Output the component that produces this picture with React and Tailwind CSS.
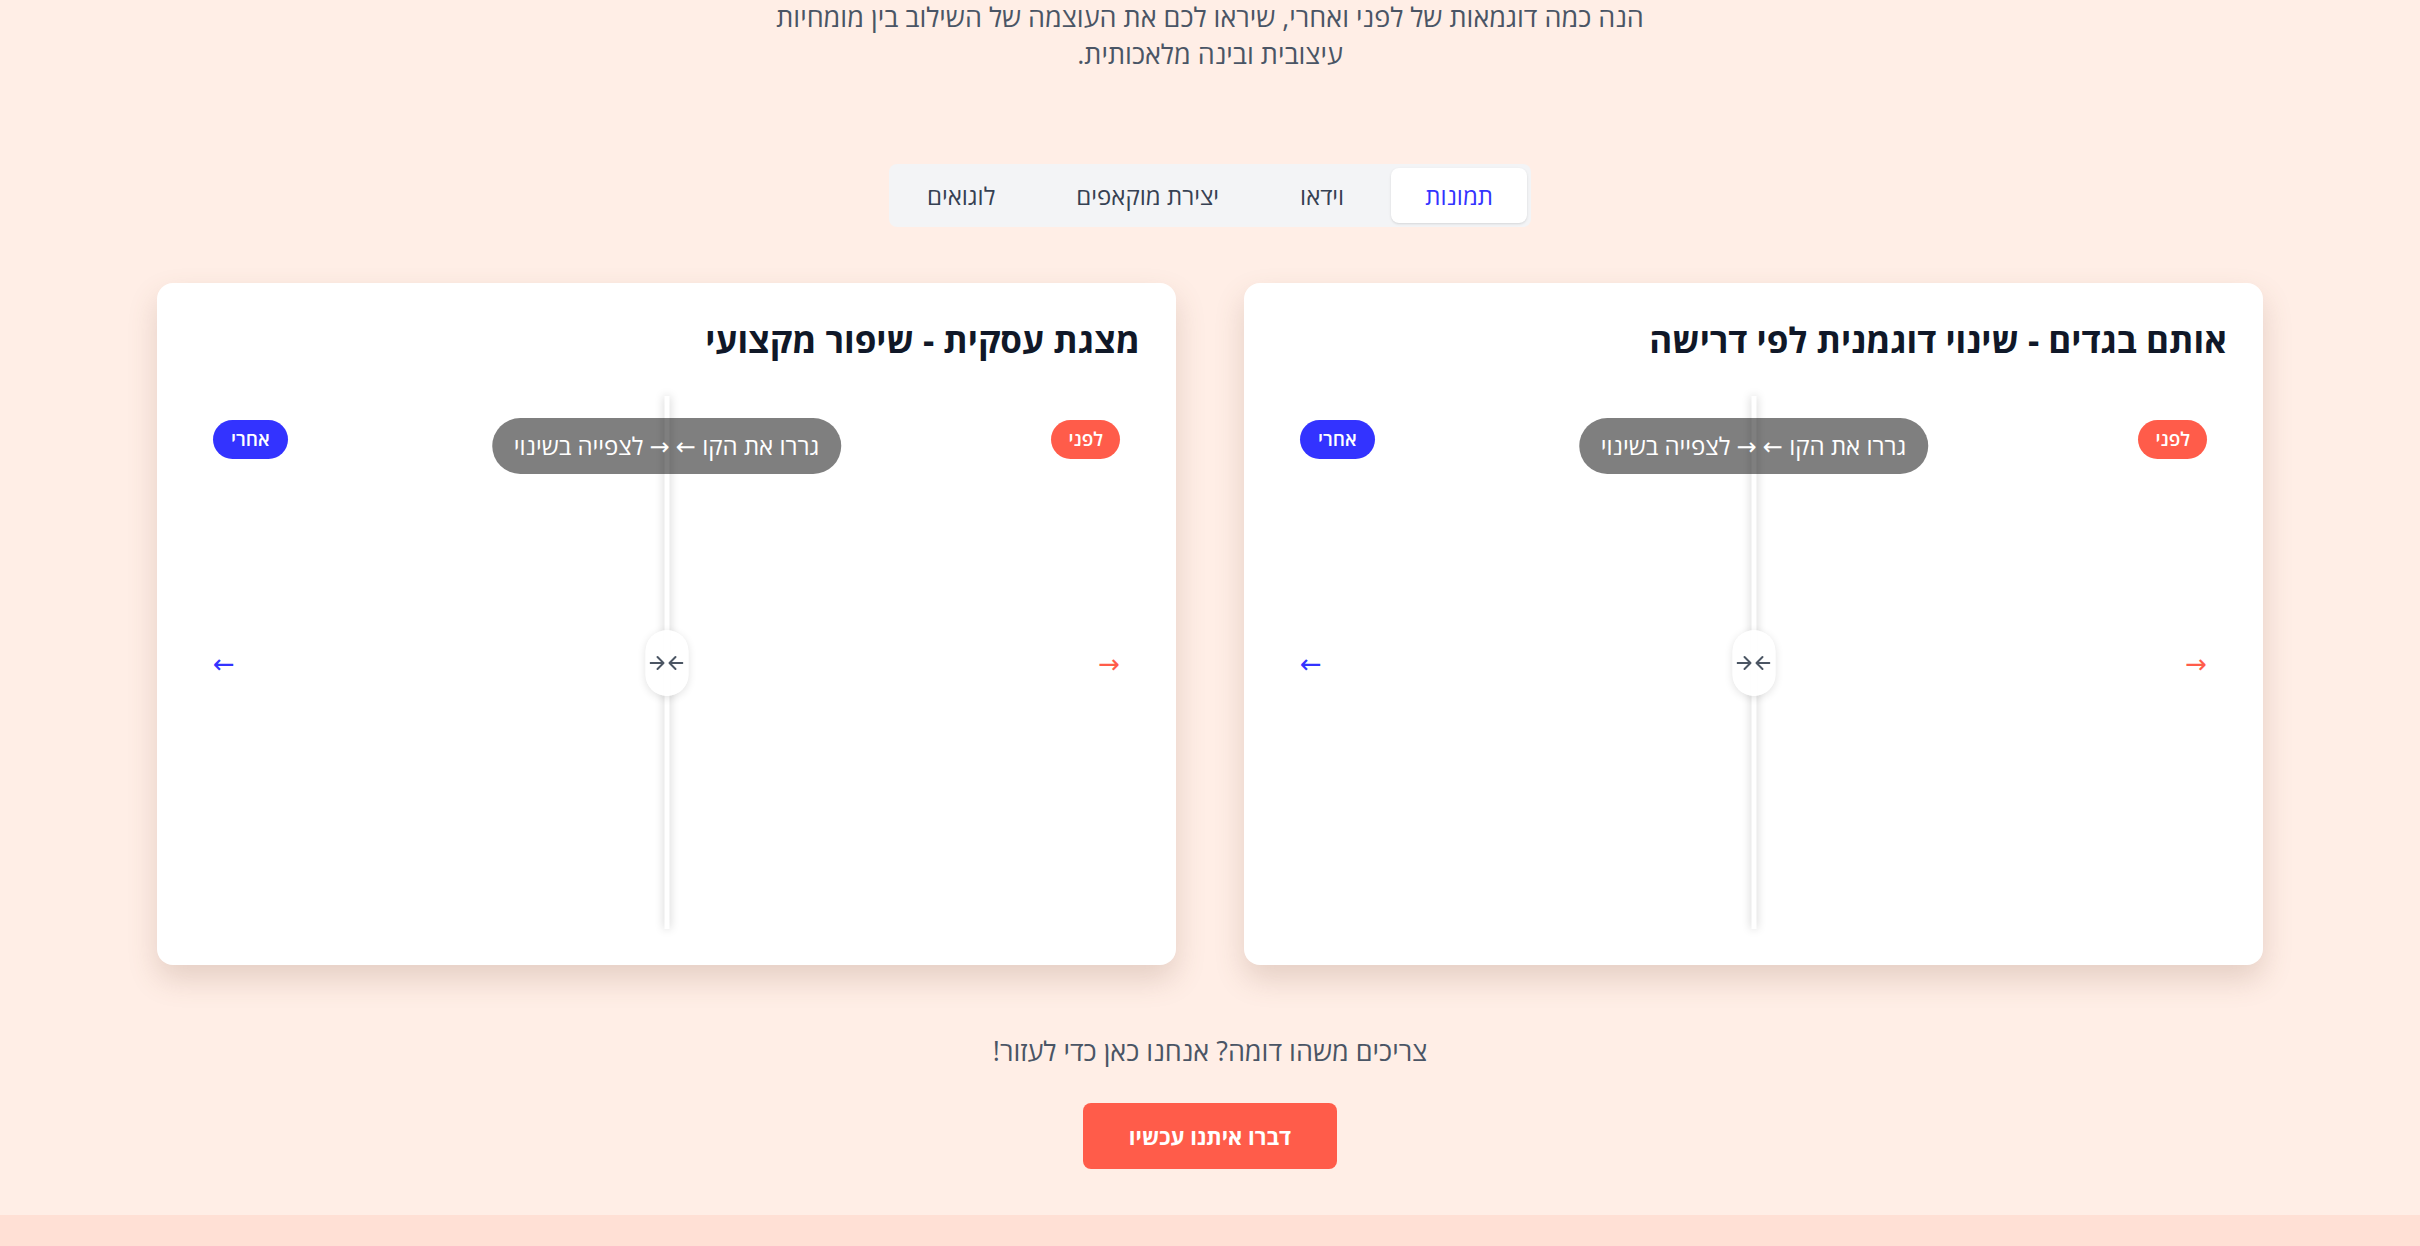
import React, { useState } from 'react';

const tabs = ['תמונות', 'וידאו', 'יצירת מוקאפים', 'לוגואים'];

const examples = [
  { title: 'אותם בגדים - שינוי דוגמנית לפי דרישה' },
  { title: 'מצגת עסקית - שיפור מקצועי' },
];

const CompareCard = ({ title }) => (
  <div className="bg-white rounded-2xl shadow-[0_14px_30px_rgba(120,80,60,0.2)] p-9">
    <h3 className="text-[35px] leading-[42px] font-bold text-gray-900 text-right mb-[35px]">{title}</h3>
    <div className="relative h-[533px]">
      <span className="absolute top-[24px] right-[20px] bg-[#ff5c4a] text-white text-[19px] font-semibold rounded-full h-[39px] px-[17px] flex items-center">לפני</span>
      <span className="absolute top-[24px] left-[20px] bg-[#3333ff] text-white text-[19px] font-semibold rounded-full h-[39px] px-[18px] flex items-center">אחרי</span>

      <div className="absolute inset-y-0 left-1/2 -translate-x-1/2 w-[5px] bg-white shadow-[0_0_10px_rgba(0,0,0,0.22)]" />

      <div className="absolute top-[22px] left-1/2 -translate-x-1/2 bg-black/50 text-white text-[24px] rounded-full h-[56px] px-[22px] flex items-center whitespace-nowrap">
        גררו את הקו ← → לצפייה בשינוי
      </div>

      <span className="absolute top-1/2 -translate-y-1/2 left-[20px] text-[#3333ff] text-[26px]">←</span>
      <span className="absolute top-1/2 -translate-y-1/2 right-[20px] text-[#ff5c4a] text-[26px]">→</span>

      <div className="absolute top-1/2 left-1/2 -translate-x-1/2 -translate-y-1/2 w-[43px] h-[66px] rounded-full bg-white/95 shadow-[0_2px_8px_rgba(0,0,0,0.12)] flex items-center justify-center">
        <svg width="34" height="16" viewBox="0 0 34 16" fill="none" stroke="#4b5563" strokeWidth="2" strokeLinecap="round" strokeLinejoin="round">
          <path d="M1 8h12M8 2l6 6-6 6" />
          <path d="M33 8H21M26 2l-6 6 6 6" />
        </svg>
      </div>
    </div>
  </div>
);

export default function App() {
  const [active, setActive] = useState(0);

  return (
    <div dir="rtl" className="min-h-screen bg-[#ffeee6] font-['Open_Sans','DejaVu_Sans',sans-serif] flex flex-col">
      <section className="flex flex-col items-center -mt-[2px]">
        <p className="max-w-[920px] text-center text-[27px] leading-[37px] text-gray-600">
          הנה כמה דוגמאות של לפני ואחרי, שיראו לכם את העוצמה של השילוב בין מומחיות עיצובית ובינה מלאכותית.
        </p>

        <div className="mt-[92px] bg-gray-100 rounded-lg p-1 flex gap-[13px]">
          {tabs.map((t, i) => (
            <button
              key={t}
              onClick={() => setActive(i)}
              className={
                i === active
                  ? 'bg-white rounded-lg shadow-sm px-[34px] h-[55px] text-[24px] text-[#3333ff]'
                  : 'px-[34px] h-[55px] text-[24px] text-gray-700'
              }
            >
              {t}
            </button>
          ))}
        </div>

        <div className="mt-[56px] w-[2106px] grid grid-cols-2 gap-[68px]">
          {examples.map((e) => (
            <CompareCard key={e.title} title={e.title} />
          ))}
        </div>

        <p className="mt-[70px] text-[27px] leading-[32px] text-gray-600">צריכים משהו דומה? אנחנו כאן כדי לעזור!</p>
        <button className="mt-[36px] bg-[#ff5c4a] text-white font-bold text-[22px] rounded-lg w-[254px] h-[66px]">
          דברו איתנו עכשיו
        </button>
      </section>
      <div className="mt-[46px] flex-1 bg-[#ffe0d5] min-h-[40px]" />
    </div>
  );
}
